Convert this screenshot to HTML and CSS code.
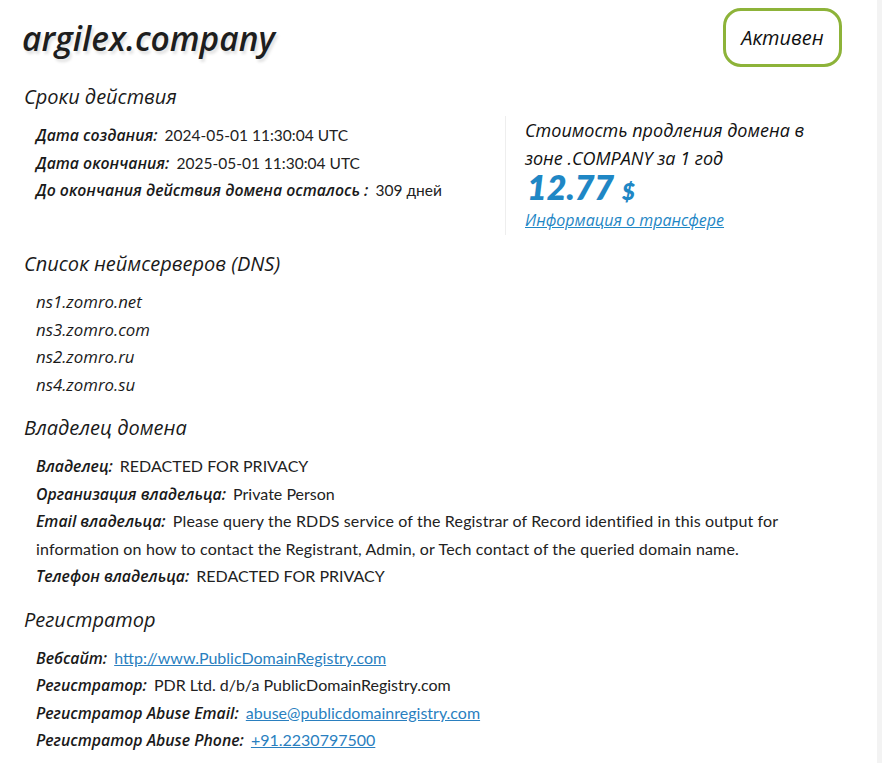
FILE: index.html
```html
<!DOCTYPE html>
<html lang="ru">
<head>
<meta charset="utf-8">
<title>argilex.company</title>
<link rel="stylesheet" href="styles.css">
</head>
<body>
<div class="page">
  <header class="header">
    <h1 class="domain">argilex.company</h1>
    <div class="badge">Активен</div>
  </header>

  <h2 class="section-title">Сроки действия</h2>
  <div class="term">
    <div class="rows">
      <div class="row"><span class="label">Дата создания:</span> <span class="value">2024-05-01 11:30:04 UTC</span></div>
      <div class="row"><span class="label">Дата окончания:</span> <span class="value">2025-05-01 11:30:04 UTC</span></div>
      <div class="row"><span class="label">До окончания действия домена осталось :</span> <span class="value">309 дней</span></div>
    </div>
    <div class="price-box">
      <div class="price-title">Стоимость продления домена в зоне .COMPANY за 1 год</div>
      <div class="price"><span class="amount">12.77</span><span class="currency">$</span></div>
      <a class="transfer" href="#">Информация о трансфере</a>
    </div>
  </div>

  <h2 class="section-title">Список неймсерверов (DNS)</h2>
  <div class="rows">
    <div class="row ns">ns1.zomro.net</div>
    <div class="row ns">ns3.zomro.com</div>
    <div class="row ns">ns2.zomro.ru</div>
    <div class="row ns">ns4.zomro.su</div>
  </div>

  <h2 class="section-title">Владелец домена</h2>
  <div class="rows owner">
    <div class="row"><span class="label">Владелец:</span> <span class="value">REDACTED FOR PRIVACY</span></div>
    <div class="row"><span class="label">Организация владельца:</span> <span class="value">Private Person</span></div>
    <div class="row long"><span class="label">Email владельца:</span> Please query the RDDS service of the Registrar of Record identified in this output for information on how to contact the Registrant, Admin, or Tech contact of the queried domain name.</div>
    <div class="row"><span class="label">Телефон владельца:</span> <span class="value">REDACTED FOR PRIVACY</span></div>
  </div>

  <h2 class="section-title">Регистратор</h2>
  <div class="rows">
    <div class="row"><span class="label">Вебсайт:</span> <a class="link" href="#">http://www.PublicDomainRegistry.com</a></div>
    <div class="row"><span class="label">Регистратор:</span> <span class="value">PDR Ltd. d/b/a PublicDomainRegistry.com</span></div>
    <div class="row"><span class="label">Регистратор Abuse Email:</span> <a class="link" href="#">abuse@publicdomainregistry.com</a></div>
    <div class="row"><span class="label">Регистратор Abuse Phone:</span> <a class="link" href="#">+91.2230797500</a></div>
  </div>
</div>
</body>
</html>
```

FILE: styles.css
```css
html, body {
  margin: 0;
  padding: 0;
}
body {
  background: #f3f3f3;
  font-family: "Lato", "Open Sans", sans-serif;
  color: #1a1a1a;
}
.page {
  width: 877px;
  min-height: 763px;
  background: #ffffff;
  box-sizing: border-box;
  padding: 0 0 0 22px;
}
.header {
  display: flex;
  justify-content: space-between;
  align-items: flex-start;
  padding-right: 35px;
  margin-bottom: 16px;
}
.domain {
  margin: 18px 0 0 0;
  font-family: "Open Sans", sans-serif;
  font-size: 33.5px;
  line-height: 40px;
  font-style: italic;
  font-weight: 600;
  color: #1e1e1e;
  text-shadow: 2px 3px 3px rgba(0,0,0,0.12);
}
.badge {
  margin-top: 8px;
  width: 119px;
  height: 59px;
  box-sizing: border-box;
  border: 3px solid #8db339;
  border-radius: 18px;
  display: flex;
  align-items: center;
  justify-content: center;
  font-family: "Open Sans", sans-serif;
  font-style: italic;
  font-size: 20px;
  color: #111;
}
.section-title {
  margin: 0;
  padding-left: 2px;
  font-family: "Open Sans", sans-serif;
  font-size: 20px;
  line-height: 28px;
  font-weight: 400;
  font-style: italic;
  color: #1a1a1a;
}
.term {
  display: flex;
  align-items: flex-start;
  margin: 10px 0 15px;
}
.rows {
  padding-left: 14px;
  margin: 10px 0 16px;
}
.term .rows {
  width: 483px;
  box-sizing: border-box;
  margin: 0;
}
.row {
  font-size: 16px;
  line-height: 27.5px;
  color: #222;
}
.row > span,
.row > a {
  line-height: 1;
}
.label {
  font-family: "Open Sans", sans-serif;
  font-size: 15.8px;
  font-style: italic;
  font-weight: 600;
  color: #1a1a1a;
  margin-right: 3px;
  letter-spacing: 0;
}
.value {
  color: #222;
}
.row.long {
  letter-spacing: 0.15px;
}
.row.long .label {
  letter-spacing: 0;
}
.term .value {
  font-size: 15.5px;
}
.ns {
  font-family: "Open Sans", sans-serif;
  font-style: italic;
  font-size: 16.8px;
  color: #1a1a1a;
}
.owner .row {
  width: 790px;
}
.price-box {
  border-left: 1px solid #eeeeee;
  padding: 0 0 1px 19px;
  margin-top: -5px;
  width: 300px;
}
.price-title {
  font-family: "Open Sans", sans-serif;
  font-size: 18px;
  line-height: 28px;
  font-style: italic;
  color: #111;
  width: 295px;
}
.price {
  display: flex;
  align-items: baseline;
  height: 30px;
  color: #1f87c5;
  font-style: italic;
  font-weight: 800;
  margin-bottom: 4px;
}
.amount {
  font-size: 34px;
  line-height: 30px;
  padding-left: 2px;
}
.currency {
  font-size: 22px;
  line-height: 30px;
  margin-left: 8px;
}
.transfer {
  display: block;
  color: #1f87c5;
  font-family: "Open Sans", sans-serif;
  font-style: italic;
  font-size: 16px;
  line-height: 28px;
  text-decoration: underline;
}
.link {
  color: #2a7fbf;
  text-decoration: underline;
}
```
